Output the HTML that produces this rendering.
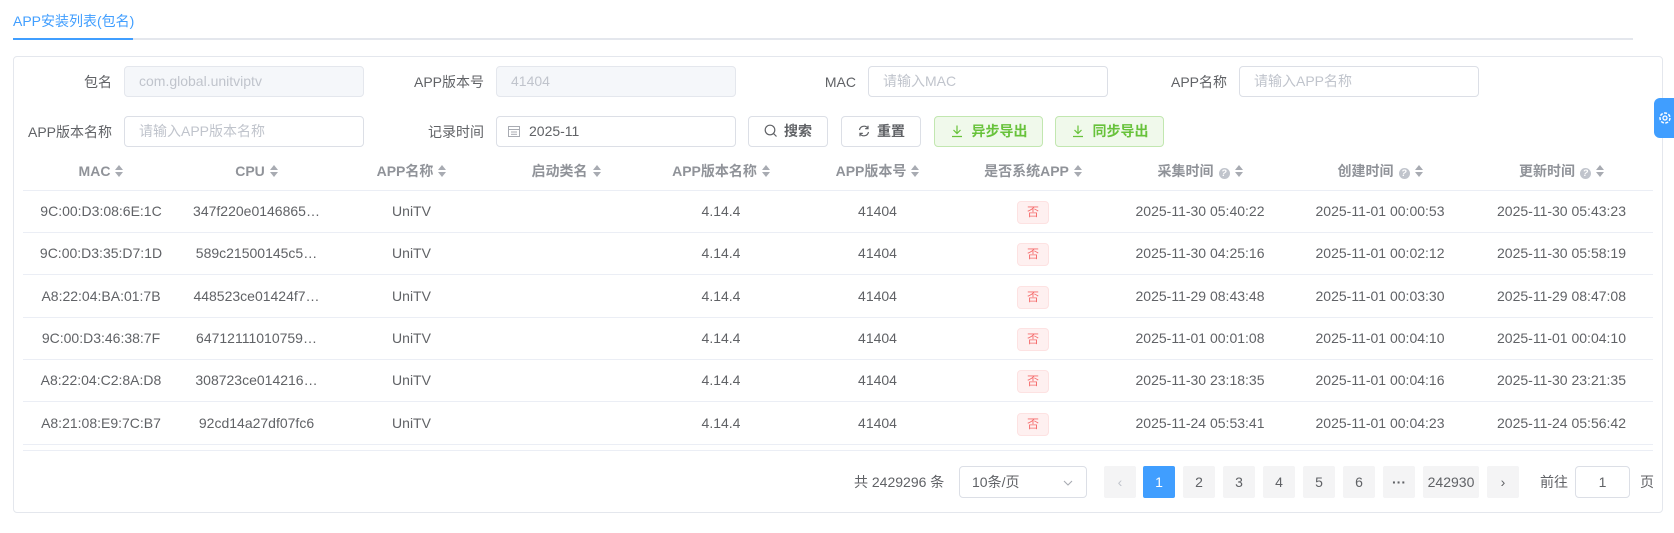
<!DOCTYPE html>
<html><head><meta charset="utf-8"><style>
*{box-sizing:border-box;margin:0;padding:0}
body{width:1674px;height:533px;background:#fff;font-family:"Liberation Sans","Noto Sans CJK SC",sans-serif;font-size:14px;color:#606266;position:relative;overflow:hidden}
.a{position:absolute}
.tab{left:13px;top:10px;color:#409eff;font-size:14px;line-height:22px}
.tl{left:13px;top:38px;width:1620px;height:2px;background:#e4e7ed}
.tb{left:13px;top:38px;width:120px;height:2px;background:#409eff}
.card{left:13px;top:56px;width:1650px;height:457px;border:1px solid #e4e7ed;border-radius:4px}
.lbl{text-align:right;line-height:32px;height:32px;color:#606266;font-size:14px}
.inp{height:31px;border:1px solid #dcdfe6;border-radius:4px;line-height:29px;padding-left:14px;color:#c0c4cc;font-size:14px;background:#fff}
.dis{background:#f5f7fa;border-color:#e4e7ed}
.btn{height:31px;border:1px solid #dcdfe6;border-radius:4px;line-height:29px;text-align:center;font-size:14px;color:#606266;font-weight:bold;background:#fff}
.gr{background:#f0f9eb;border-color:#c2e7b0;color:#67c23a}
.th{top:160px;height:22px;line-height:22px;text-align:center;font-weight:bold;color:#909399;font-size:14px;white-space:nowrap}
.car{display:inline-block;width:8px;height:12px;vertical-align:-1px;margin-left:5px;position:relative}
.car:before{content:"";position:absolute;left:0;top:0;border:4px solid transparent;border-bottom:5px solid #a8abb2;border-top:0}
.car:after{content:"";position:absolute;left:0;top:7px;border:4px solid transparent;border-top:5px solid #a8abb2;border-bottom:0}
.q{display:inline-block;width:11px;height:11px;border-radius:50%;background:#c0c4cc;color:#fff;font-size:9px;line-height:11px;text-align:center;vertical-align:0;margin-left:5px}
.hl{left:23px;width:1630px;height:1px;background:#ebeef5}
.td{height:22px;line-height:22px;text-align:center;white-space:nowrap;font-size:14px;color:#606266}
.tag{display:inline-block;width:32px;height:23px;line-height:21px;border:1px solid #fde2e2;background:#fef0f0;color:#f56c6c;font-size:12px;border-radius:4px;text-align:center}
.pg{top:466px;height:32px;width:32px;line-height:32px;text-align:center;background:#f4f4f5;border-radius:2px;font-size:14px;color:#606266;font-weight:normal}
</style></head><body>
<div class="a tab">APP安装列表(包名)</div>
<div class="a tl"></div><div class="a tb"></div>
<div class="a card"></div>
<div class="a" style="left:1654px;top:98px;width:24px;height:40px;background:#409eff;border-radius:6px 0 0 6px"><svg width="20" height="40" viewBox="0 0 20 40"><circle cx="11" cy="20" r="5" fill="none" stroke="#fff" stroke-width="1.5" stroke-dasharray="3 1.5"/><circle cx="11" cy="20" r="2" fill="none" stroke="#fff" stroke-width="1.3"/></svg></div>

<div class="a lbl" style="left:20px;top:66px;width:92px">包名</div>
<div class="a inp dis" style="left:124px;top:66px;width:240px">com.global.unitviptv</div>
<div class="a lbl" style="left:380px;top:66px;width:104px">APP版本号</div>
<div class="a inp dis" style="left:496px;top:66px;width:240px">41404</div>
<div class="a lbl" style="left:760px;top:66px;width:96px">MAC</div>
<div class="a inp" style="left:868px;top:66px;width:240px">请输入MAC</div>
<div class="a lbl" style="left:1120px;top:66px;width:107px">APP名称</div>
<div class="a inp" style="left:1239px;top:66px;width:240px">请输入APP名称</div>

<div class="a lbl" style="left:20px;top:116px;width:92px">APP版本名称</div>
<div class="a inp" style="left:124px;top:116px;width:240px">请输入APP版本名称</div>
<div class="a lbl" style="left:380px;top:116px;width:104px">记录时间</div>
<div class="a inp" style="left:496px;top:116px;width:240px;color:#606266;padding-left:10px"><svg width="14" height="14" viewBox="0 0 14 14" style="vertical-align:-2px;margin-right:8px"><rect x="1.5" y="2.5" width="11" height="10" fill="none" stroke="#a8abb2"/><line x1="1.5" y1="5.5" x2="12.5" y2="5.5" stroke="#a8abb2"/><line x1="4" y1="8" x2="10" y2="8" stroke="#a8abb2"/><line x1="4" y1="10.3" x2="10" y2="10.3" stroke="#a8abb2"/></svg>2025-11</div>
<div class="a btn" style="left:748px;top:116px;width:80px"><svg width="14" height="14" viewBox="0 0 14 14" style="vertical-align:-2px;margin-right:6px"><circle cx="6" cy="6" r="4.8" fill="none" stroke="#606266" stroke-width="1.2"/><line x1="9.5" y1="9.5" x2="12.5" y2="12.5" stroke="#606266" stroke-width="1.2"/></svg>搜索</div>
<div class="a btn" style="left:841px;top:116px;width:80px"><svg width="14" height="14" viewBox="0 0 14 14" style="vertical-align:-2px;margin-right:6px"><path d="M2.5 6A4.6 4.6 0 0 1 11 4.5M11.5 8A4.6 4.6 0 0 1 3 9.5" fill="none" stroke="#606266" stroke-width="1.2"/><path d="M11 1.8V4.6H8.2M3 12.2V9.4h2.8" fill="none" stroke="#606266" stroke-width="1.2"/></svg>重置</div>
<div class="a btn gr" style="left:934px;top:116px;width:109px"><svg width="14" height="14" viewBox="0 0 14 14" style="vertical-align:-2px;margin-right:8px"><path d="M7 1.5v8M3.5 6l3.5 3.5L10.5 6M2 12.5h10" fill="none" stroke="#67c23a" stroke-width="1.2"/></svg>异步导出</div>
<div class="a btn gr" style="left:1055px;top:116px;width:109px"><svg width="14" height="14" viewBox="0 0 14 14" style="vertical-align:-2px;margin-right:8px"><path d="M7 1.5v8M3.5 6l3.5 3.5L10.5 6M2 12.5h10" fill="none" stroke="#67c23a" stroke-width="1.2"/></svg>同步导出</div>

<div class="a th" style="left:23px;width:156px">MAC<i class="car"></i></div>
<div class="a th" style="left:179px;width:155px">CPU<i class="car"></i></div>
<div class="a th" style="left:334px;width:155px">APP名称<i class="car"></i></div>
<div class="a th" style="left:489px;width:154px">启动类名<i class="car"></i></div>
<div class="a th" style="left:643px;width:156px">APP版本名称<i class="car"></i></div>
<div class="a th" style="left:799px;width:157px">APP版本号<i class="car"></i></div>
<div class="a th" style="left:956px;width:154px">是否系统APP<i class="car"></i></div>
<div class="a th" style="left:1110px;width:180px">采集时间<i class="q">?</i><i class="car"></i></div>
<div class="a th" style="left:1290px;width:180px">创建时间<i class="q">?</i><i class="car"></i></div>
<div class="a th" style="left:1470px;width:183px">更新时间<i class="q">?</i><i class="car"></i></div>
<div class="a hl" style="top:190px"></div>

<div id="rows"></div>
<script>
var d=[["9C:00:D3:08:6E:1C","347f220e0146865…","2025-11-30 05:40:22","2025-11-01 00:00:53","2025-11-30 05:43:23"],
["9C:00:D3:35:D7:1D","589c21500145c5…","2025-11-30 04:25:16","2025-11-01 00:02:12","2025-11-30 05:58:19"],
["A8:22:04:BA:01:7B","448523ce01424f7…","2025-11-29 08:43:48","2025-11-01 00:03:30","2025-11-29 08:47:08"],
["9C:00:D3:46:38:7F","64712111010759…","2025-11-01 00:01:08","2025-11-01 00:04:10","2025-11-01 00:04:10"],
["A8:22:04:C2:8A:D8","308723ce014216…","2025-11-30 23:18:35","2025-11-01 00:04:16","2025-11-30 23:21:35"],
["A8:21:08:E9:7C:B7","92cd14a27df07fc6","2025-11-24 05:53:41","2025-11-01 00:04:23","2025-11-24 05:56:42"]];
var cols=[[23,156],[179,155],[334,155],[489,154],[643,156],[799,157],[956,154],[1110,180],[1290,180],[1470,183]];
var h="";
d.forEach(function(r,i){var c=211+i*42.3;var t=Math.round(c-11);
var v=[r[0],r[1],"UniTV","","4.14.4","41404",'<span class="tag">否</span>',r[2],r[3],r[4]];
v.forEach(function(x,j){h+='<div class="a td" style="left:'+cols[j][0]+'px;width:'+cols[j][1]+'px;top:'+t+'px">'+x+'</div>';});
h+='<div class="a hl" style="top:'+Math.round(c+21)+'px"></div>';});
h+='<div class="a hl" style="top:450px"></div>';
document.getElementById("rows").innerHTML=h;
</script>

<div class="a" style="left:854px;top:466px;line-height:32px;font-size:14px">共 2429296 条</div>
<div class="a inp" style="left:959px;top:466px;width:128px;height:32px;color:#606266;line-height:30px;padding-left:12px">10条/页<svg width="12" height="12" viewBox="0 0 12 12" style="position:absolute;right:12px;top:10px"><path d="M2 4l4 4 4-4" fill="none" stroke="#a8abb2" stroke-width="1.1"/></svg></div>
<div class="a pg" style="left:1104px;color:#c0c4cc">‹</div>
<div class="a pg" style="left:1143px;background:#409eff;color:#fff">1</div>
<div class="a pg" style="left:1183px">2</div>
<div class="a pg" style="left:1223px">3</div>
<div class="a pg" style="left:1263px">4</div>
<div class="a pg" style="left:1303px">5</div>
<div class="a pg" style="left:1343px">6</div>
<div class="a pg" style="left:1383px;font-weight:bold">···</div>
<div class="a pg" style="left:1423px;width:56px">242930</div>
<div class="a pg" style="left:1487px">›</div>
<div class="a" style="left:1540px;top:466px;line-height:32px">前往</div>
<div class="a inp" style="left:1575px;top:466px;width:55px;height:32px;color:#606266;text-align:center;padding:0;line-height:30px">1</div>
<div class="a" style="left:1640px;top:466px;line-height:32px">页</div>
</body></html>
